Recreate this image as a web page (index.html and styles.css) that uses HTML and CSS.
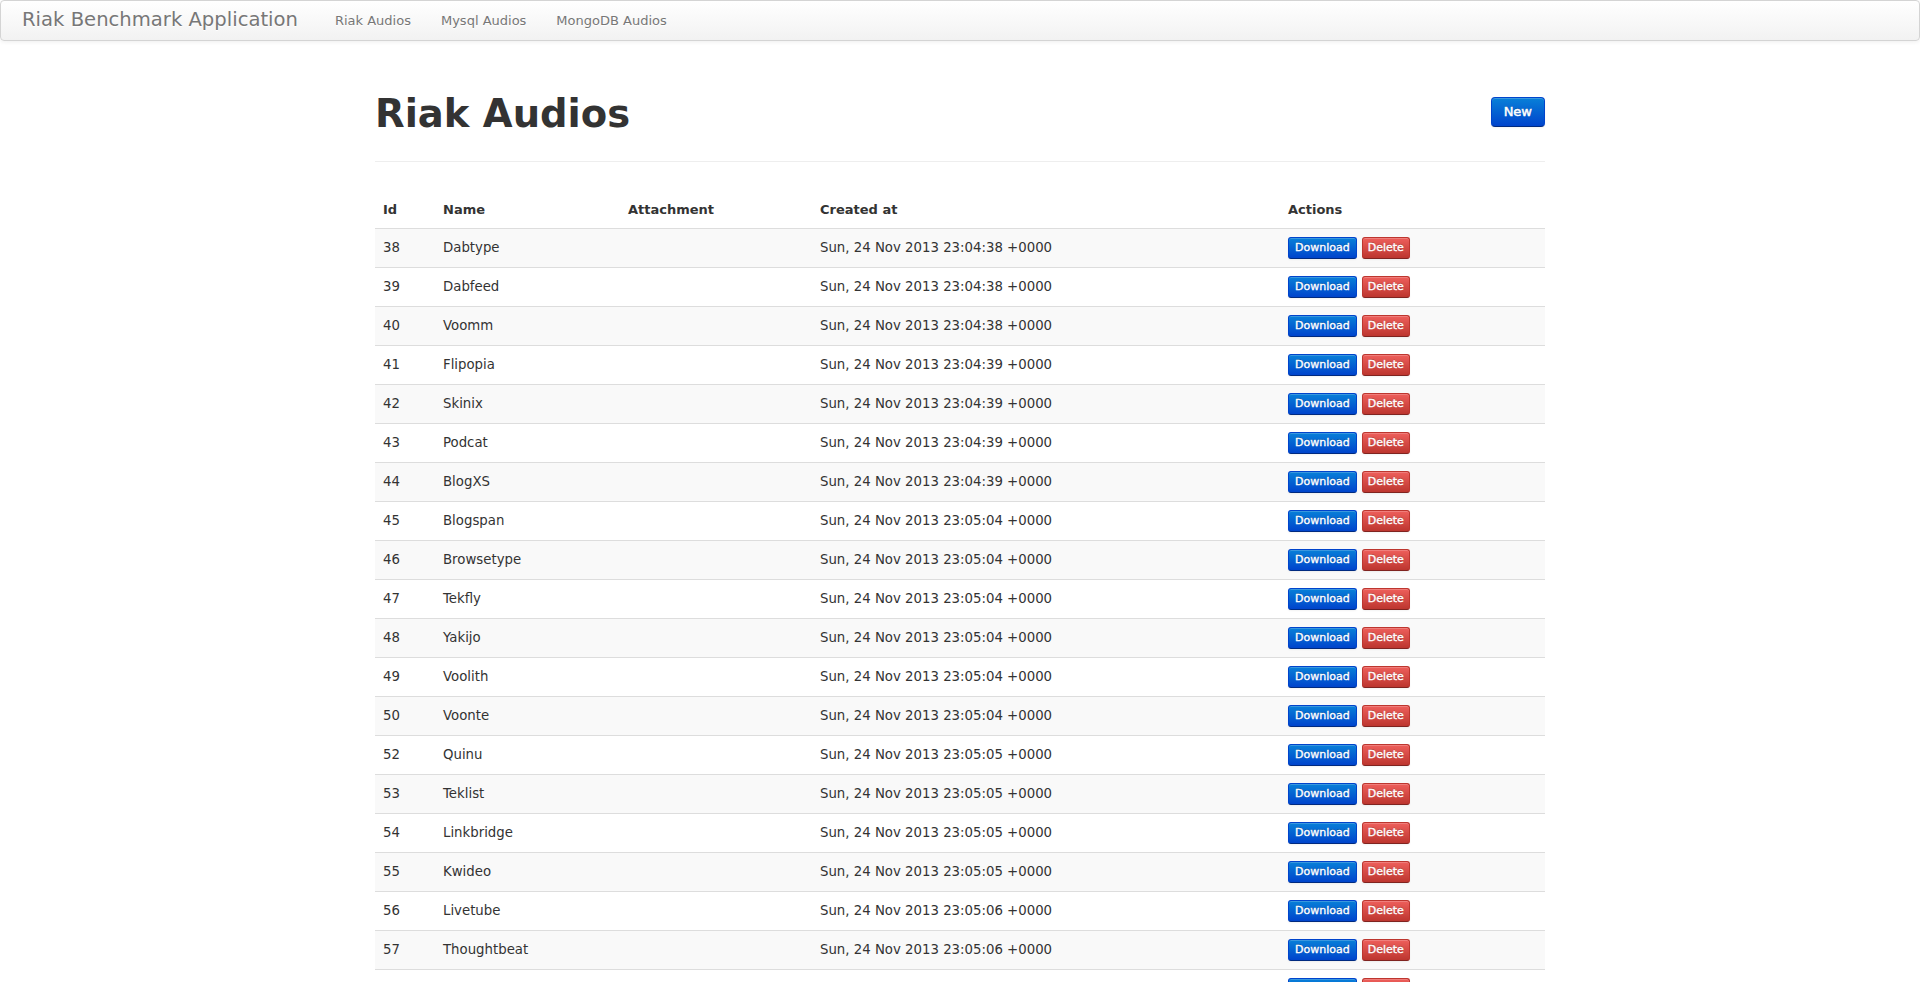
FILE: index.html
```html
<!DOCTYPE html>
<html>
<head>
<meta charset="utf-8">
<title>Riak Benchmark Application</title>
<link rel="stylesheet" href="styles.css">
</head>
<body>
<div class="navbar">
  <a class="brand" href="#">Riak Benchmark Application</a>
  <ul class="nav">
    <li><a href="#">Riak Audios</a></li>
    <li><a href="#">Mysql Audios</a></li>
    <li><a href="#">MongoDB Audios</a></li>
  </ul>
</div>
<div class="container">
  <div class="page-header">
    <h1>Riak Audios</h1>
    <a class="btn btn-primary btn-new" href="#">New</a>
  </div>
  <table class="table">
    <thead>
      <tr><th class="c-id">Id</th><th class="c-name">Name</th><th class="c-att">Attachment</th><th class="c-date">Created at</th><th class="c-act">Actions</th></tr>
    </thead>
    <tbody>
      <tr><td>38</td><td>Dabtype</td><td></td><td>Sun, 24 Nov 2013 23:04:38 +0000</td><td><div class="actions"><a class="btn btn-mini btn-primary" href="#">Download</a><a class="btn btn-mini btn-danger" href="#">Delete</a></div></td></tr>
      <tr><td>39</td><td>Dabfeed</td><td></td><td>Sun, 24 Nov 2013 23:04:38 +0000</td><td><div class="actions"><a class="btn btn-mini btn-primary" href="#">Download</a><a class="btn btn-mini btn-danger" href="#">Delete</a></div></td></tr>
      <tr><td>40</td><td>Voomm</td><td></td><td>Sun, 24 Nov 2013 23:04:38 +0000</td><td><div class="actions"><a class="btn btn-mini btn-primary" href="#">Download</a><a class="btn btn-mini btn-danger" href="#">Delete</a></div></td></tr>
      <tr><td>41</td><td>Flipopia</td><td></td><td>Sun, 24 Nov 2013 23:04:39 +0000</td><td><div class="actions"><a class="btn btn-mini btn-primary" href="#">Download</a><a class="btn btn-mini btn-danger" href="#">Delete</a></div></td></tr>
      <tr><td>42</td><td>Skinix</td><td></td><td>Sun, 24 Nov 2013 23:04:39 +0000</td><td><div class="actions"><a class="btn btn-mini btn-primary" href="#">Download</a><a class="btn btn-mini btn-danger" href="#">Delete</a></div></td></tr>
      <tr><td>43</td><td>Podcat</td><td></td><td>Sun, 24 Nov 2013 23:04:39 +0000</td><td><div class="actions"><a class="btn btn-mini btn-primary" href="#">Download</a><a class="btn btn-mini btn-danger" href="#">Delete</a></div></td></tr>
      <tr><td>44</td><td>BlogXS</td><td></td><td>Sun, 24 Nov 2013 23:04:39 +0000</td><td><div class="actions"><a class="btn btn-mini btn-primary" href="#">Download</a><a class="btn btn-mini btn-danger" href="#">Delete</a></div></td></tr>
      <tr><td>45</td><td>Blogspan</td><td></td><td>Sun, 24 Nov 2013 23:05:04 +0000</td><td><div class="actions"><a class="btn btn-mini btn-primary" href="#">Download</a><a class="btn btn-mini btn-danger" href="#">Delete</a></div></td></tr>
      <tr><td>46</td><td>Browsetype</td><td></td><td>Sun, 24 Nov 2013 23:05:04 +0000</td><td><div class="actions"><a class="btn btn-mini btn-primary" href="#">Download</a><a class="btn btn-mini btn-danger" href="#">Delete</a></div></td></tr>
      <tr><td>47</td><td>Tekfly</td><td></td><td>Sun, 24 Nov 2013 23:05:04 +0000</td><td><div class="actions"><a class="btn btn-mini btn-primary" href="#">Download</a><a class="btn btn-mini btn-danger" href="#">Delete</a></div></td></tr>
      <tr><td>48</td><td>Yakijo</td><td></td><td>Sun, 24 Nov 2013 23:05:04 +0000</td><td><div class="actions"><a class="btn btn-mini btn-primary" href="#">Download</a><a class="btn btn-mini btn-danger" href="#">Delete</a></div></td></tr>
      <tr><td>49</td><td>Voolith</td><td></td><td>Sun, 24 Nov 2013 23:05:04 +0000</td><td><div class="actions"><a class="btn btn-mini btn-primary" href="#">Download</a><a class="btn btn-mini btn-danger" href="#">Delete</a></div></td></tr>
      <tr><td>50</td><td>Voonte</td><td></td><td>Sun, 24 Nov 2013 23:05:04 +0000</td><td><div class="actions"><a class="btn btn-mini btn-primary" href="#">Download</a><a class="btn btn-mini btn-danger" href="#">Delete</a></div></td></tr>
      <tr><td>52</td><td>Quinu</td><td></td><td>Sun, 24 Nov 2013 23:05:05 +0000</td><td><div class="actions"><a class="btn btn-mini btn-primary" href="#">Download</a><a class="btn btn-mini btn-danger" href="#">Delete</a></div></td></tr>
      <tr><td>53</td><td>Teklist</td><td></td><td>Sun, 24 Nov 2013 23:05:05 +0000</td><td><div class="actions"><a class="btn btn-mini btn-primary" href="#">Download</a><a class="btn btn-mini btn-danger" href="#">Delete</a></div></td></tr>
      <tr><td>54</td><td>Linkbridge</td><td></td><td>Sun, 24 Nov 2013 23:05:05 +0000</td><td><div class="actions"><a class="btn btn-mini btn-primary" href="#">Download</a><a class="btn btn-mini btn-danger" href="#">Delete</a></div></td></tr>
      <tr><td>55</td><td>Kwideo</td><td></td><td>Sun, 24 Nov 2013 23:05:05 +0000</td><td><div class="actions"><a class="btn btn-mini btn-primary" href="#">Download</a><a class="btn btn-mini btn-danger" href="#">Delete</a></div></td></tr>
      <tr><td>56</td><td>Livetube</td><td></td><td>Sun, 24 Nov 2013 23:05:06 +0000</td><td><div class="actions"><a class="btn btn-mini btn-primary" href="#">Download</a><a class="btn btn-mini btn-danger" href="#">Delete</a></div></td></tr>
      <tr><td>57</td><td>Thoughtbeat</td><td></td><td>Sun, 24 Nov 2013 23:05:06 +0000</td><td><div class="actions"><a class="btn btn-mini btn-primary" href="#">Download</a><a class="btn btn-mini btn-danger" href="#">Delete</a></div></td></tr>
      <tr><td>58</td><td>Zoomzone</td><td></td><td>Sun, 24 Nov 2013 23:05:06 +0000</td><td><div class="actions"><a class="btn btn-mini btn-primary" href="#">Download</a><a class="btn btn-mini btn-danger" href="#">Delete</a></div></td></tr>
    </tbody>
  </table>
</div>
</body>
</html>
```
FILE: styles.css
```css
* { box-sizing: border-box; }
html, body { margin: 0; padding: 0; }
body {
  font-family: "DejaVu Sans", Verdana, sans-serif;
  font-size: 13px;
  line-height: 20px;
  color: #333;
  background: #fff;
}
a { text-decoration: none; }

.navbar {
  display: flex;
  align-items: stretch;
  height: 41px;
  padding: 0 20px;
  background: linear-gradient(to bottom, #ffffff, #f2f2f2);
  border: 1px solid #d4d4d4;
  border-radius: 4px;
  box-shadow: 0 1px 4px rgba(0,0,0,0.065);
}
.brand {
  display: block;
  margin-left: -20px;
  padding: 9px 20px 10px 21px;
  font-size: 19.6px;
  line-height: 20px;
  color: #777;
  text-shadow: 0 1px 0 #fff;
}
.nav {
  display: flex;
  list-style: none;
  margin: 0;
  padding: 0 0 0 2px;
}
.nav a {
  display: block;
  padding: 10px 15px 9px;
  font-size: 13px;
  line-height: 20px;
  color: #777;
  text-shadow: 0 1px 0 #fff;
}

.container {
  width: 1170px;
  margin: 0 auto;
}
.page-header {
  display: flex;
  justify-content: space-between;
  align-items: flex-start;
  margin-top: 53px;
  padding-bottom: 27px;
  border-bottom: 1px solid #eee;
}
.page-header h1 {
  margin: 0;
  font-size: 38.5px;
  line-height: 40px;
  font-weight: bold;
  color: #333;
}

.btn {
  display: inline-block;
  color: #fff;
  text-align: center;
  font-weight: normal;
  -webkit-text-stroke: 0.35px #fff;
  border: 1px solid rgba(0,0,0,0.1);
  border-bottom-color: rgba(0,0,0,0.25);
  text-shadow: 0 -1px 0 rgba(0,0,0,0.25);
  box-shadow: inset 0 1px 0 rgba(255,255,255,0.2), 0 1px 2px rgba(0,0,0,0.05);
}
.btn-new {
  margin-top: 3px;
  padding: 4px 12px;
  font-size: 13px;
  line-height: 20px;
  border-radius: 4px;
  -webkit-text-stroke: 0.5px #fff;
}
.btn-primary { background: linear-gradient(to bottom, #0880d8, #0044cc); border-color: #0044cc #0044cc #002a80; }
.btn-danger { background: linear-gradient(to bottom, #ee5f5b, #bd362f); border-color: #bd362f #bd362f #802420; }
.btn-mini {
  padding: 0 6px;
  font-size: 11px;
  line-height: 20px;
  border-radius: 3px;
}
.btn-mini.btn-danger { padding: 0 5px; }

.table {
  width: 100%;
  margin-top: 30px;
  border-collapse: collapse;
  border-spacing: 0;
  table-layout: fixed;
}
.table th, .table td {
  padding: 8px;
  text-align: left;
  vertical-align: top;
}
.table th {
  font-weight: bold;
  line-height: 20px;
}
.table td {
  font-size: 13.3px;
  line-height: 22px;
  border-top: 1px solid #ddd;
}
.table tbody tr:nth-child(odd) td { background: #f9f9f9; }
.c-id { width: 60px; }
.c-name { width: 185px; }
.c-att { width: 192px; }
.c-date { width: 468px; }
.c-act { width: 265px; }
.actions {
  display: flex;
  gap: 5px;
  height: 22px;
}
```
